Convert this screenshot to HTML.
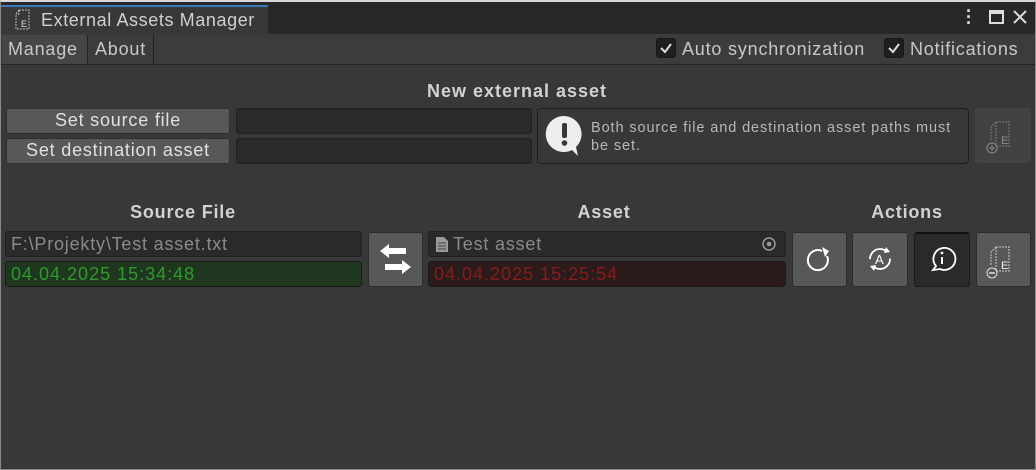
<!DOCTYPE html>
<html><head><style>
*{box-sizing:border-box;margin:0;padding:0}
body{width:1036px;height:470px;background:#383838;font-family:"Liberation Sans",sans-serif;color:#c4c4c4;position:relative;overflow:hidden;letter-spacing:0.8px}
.a{position:absolute}
.win{left:0;top:0;width:1036px;height:470px;border:1px solid #8a8a8a;border-top:2px solid #d8d8d8}
.title{left:1px;top:2px;width:1034px;height:32px;background:#282828}
.tab{left:1px;top:5px;width:267px;height:29px;background:#383838;border-top:2px solid #3a79bb}
.tb{left:1px;top:34px;width:1034px;height:31px;background:#3c3c3c;border-bottom:1px solid #242424}
.btn{background:#585858;border:1px solid #303030;border-radius:3px;color:#e0e0e0;font-size:18px;text-align:center;line-height:22px}
.fld{background:#2a2a2a;border:1px solid #212121;border-radius:3px}
.cb{width:20px;height:20px;background:#1f1f1f;border-radius:3px;border:1px solid #181818}
.h{font-weight:bold;font-size:18px;color:#d2d2d2;text-align:center}
.ab{background:#585858;border:1px solid #2c2c2c;border-radius:3px}
</style></head><body>
<div class="a title"></div>
<div class="a tab"></div>
<svg class="a" style="left:14px;top:9px" width="18" height="22" viewBox="0 0 18 22"><path d="M5 1H15V20H2V5Z M5 1V5H2" fill="none" stroke="#bbb" stroke-dasharray="2 1"/><text x="7" y="18" font-size="9" fill="#ddd" font-family="Liberation Sans">E</text></svg>
<div class="a" style="left:41px;top:10px;font-size:18px;color:#d0d0d0;letter-spacing:0.6px">External Assets Manager</div>
<div class="a" style="left:966px;top:8px;width:4px;height:18px;color:#ddd;font-size:18px;font-weight:bold;line-height:6px">·<br>·<br>·</div>
<div class="a" style="left:989px;top:10px;width:15px;height:14px;border:2px solid #ddd;border-top-width:4px"></div>
<svg class="a" style="left:1012px;top:9px" width="16" height="16"><path d="M2 2L14 14M14 2L2 14" stroke="#ddd" stroke-width="2"/></svg>
<div class="a tb"></div>
<div class="a" style="left:2px;top:35px;width:86px;height:29px;background:#464646;border-right:1px solid #222;font-size:18px;line-height:29px;padding-left:6px;color:#c8c8c8">Manage</div>
<div class="a" style="left:89px;top:35px;width:65px;height:29px;border-right:1px solid #222;font-size:18px;line-height:29px;padding-left:6px;color:#c8c8c8">About</div>
<div class="a cb" style="left:656px;top:38px"></div>
<svg class="a" style="left:656px;top:38px" width="20" height="20"><path d="M5 10L9 14L15 6" fill="none" stroke="#ddd" stroke-width="2"/></svg>
<div class="a" style="left:682px;top:39px;font-size:18px;color:#c8c8c8">Auto synchronization</div>
<div class="a cb" style="left:884px;top:38px"></div>
<svg class="a" style="left:884px;top:38px" width="20" height="20"><path d="M5 10L9 14L15 6" fill="none" stroke="#ddd" stroke-width="2"/></svg>
<div class="a" style="left:910px;top:39px;font-size:18px;color:#c8c8c8">Notifications</div>

<div class="a h" style="left:317px;top:81px;width:400px;letter-spacing:1px">New external asset</div>
<div class="a btn" style="left:6px;top:108px;width:224px;height:26px">Set source file</div>
<div class="a btn" style="left:6px;top:138px;width:224px;height:26px">Set destination asset</div>
<div class="a fld" style="left:236px;top:108px;width:296px;height:26px"></div>
<div class="a fld" style="left:236px;top:138px;width:296px;height:26px"></div>
<div class="a" style="left:537px;top:108px;width:432px;height:56px;background:#383838;border:1px solid #1e1e1e;border-radius:4px"></div>
<svg class="a" style="left:544px;top:114px" width="42" height="44" viewBox="0 0 42 44"><path d="M20 2A18 18 0 1 0 28 36L34 42L32 33A18 18 0 0 0 20 2Z" fill="#eee"/><rect x="18" y="9" width="5" height="15" rx="2" fill="#383838"/><circle cx="20.5" cy="29" r="2.8" fill="#383838"/></svg>
<div class="a" style="left:591px;top:119px;font-size:14.5px;line-height:18px;color:#b8b8b8;width:372px;letter-spacing:0.9px">Both source file and destination asset paths must be set.</div>
<div class="a" style="left:975px;top:108px;width:56px;height:55px;background:#424242;border-radius:3px"></div>
<svg class="a" style="left:985px;top:118px" width="30" height="38" viewBox="0 0 30 38"><path d="M11 4H24V28H11Z M11 4L6 9V22" fill="none" stroke="#7a7a7a" stroke-dasharray="2 1"/><text x="16" y="26" font-size="11" fill="#8a8a8a" font-family="Liberation Sans">E</text><circle cx="7" cy="30" r="5" fill="none" stroke="#8a8a8a"/><path d="M4 30H10M7 27V33" stroke="#8a8a8a"/></svg>

<div class="a h" style="left:83px;top:202px;width:200px">Source File</div>
<div class="a h" style="left:504px;top:202px;width:200px">Asset</div>
<div class="a h" style="left:807px;top:202px;width:200px">Actions</div>

<div class="a fld" style="left:5px;top:231px;width:357px;height:26px;font-size:18px;color:#8a8a8a;padding-left:5px;line-height:24px">F:\Projekty\Test asset.txt</div>
<div class="a" style="left:5px;top:261px;width:357px;height:26px;background:#1f361f;border:1px solid #1a1a1a;border-radius:3px;font-size:18px;color:#2f9a2f;padding-left:5px;line-height:24px;letter-spacing:1px">04.04.2025 15:34:48</div>
<div class="a ab" style="left:368px;top:232px;width:55px;height:55px"></div>
<svg class="a" style="left:368px;top:232px" width="55" height="55"><path d="M12 19L21 12V16H38V22H21V26Z" fill="#fff"/><path d="M43 35L34 28V32H17V38H34V42Z" fill="#fff"/></svg>

<div class="a fld" style="left:428px;top:231px;width:358px;height:26px;font-size:18px;color:#8a8a8a;padding-left:24px;line-height:24px">Test asset</div>
<svg class="a" style="left:435px;top:236px" width="14" height="17"><path d="M1 1H9L13 5V16H1Z" fill="#999"/><path d="M3 7H11M3 10H11M3 13H11" stroke="#444"/></svg>
<svg class="a" style="left:761px;top:236px" width="16" height="16"><circle cx="8" cy="8" r="6" fill="none" stroke="#999" stroke-width="1.5"/><circle cx="8" cy="8" r="2.3" fill="#999"/></svg>
<div class="a" style="left:428px;top:261px;width:358px;height:26px;background:#2c1b1b;border:1px solid #1a1a1a;border-radius:3px;font-size:18px;color:#861c1c;padding-left:5px;line-height:24px;letter-spacing:1px">04.04.2025 15:25:54</div>

<div class="a ab" style="left:792px;top:232px;width:55px;height:55px"></div>
<svg class="a" style="left:792px;top:232px" width="55" height="55"><path d="M35 24A10 10 0 1 1 30 19" fill="none" stroke="#fff" stroke-width="2"/><path d="M30 15L37 19L33 25Z" fill="#fff"/></svg>
<div class="a ab" style="left:852px;top:232px;width:56px;height:55px"></div>
<svg class="a" style="left:852px;top:232px" width="56" height="55"><circle cx="28" cy="27" r="10" fill="none" stroke="#fff" stroke-width="1.8" stroke-dasharray="22 9"/><path d="M34 15L38 20L32 21Z M22 39L18 34L24 33Z" fill="#fff"/><text x="23" y="32" font-size="13" fill="#fff" font-family="Liberation Sans">A</text></svg>
<div class="a" style="left:914px;top:232px;width:56px;height:55px;background:#2a2a2a;border:1px solid #1c1c1c;border-top:2px solid #111;border-radius:3px"></div>
<svg class="a" style="left:914px;top:232px" width="56" height="55"><path d="M22 34A11 11 0 1 1 26 37L19 38Z" fill="none" stroke="#fff" stroke-width="1.8"/><circle cx="28" cy="21" r="1.4" fill="#fff"/><path d="M28 25V32" stroke="#fff" stroke-width="2"/></svg>
<div class="a ab" style="left:976px;top:232px;width:55px;height:55px"></div>
<svg class="a" style="left:985px;top:243px" width="30" height="38" viewBox="0 0 30 38"><path d="M11 4H24V28H11Z M11 4L6 9V22" fill="none" stroke="#ccc" stroke-dasharray="2 1"/><text x="16" y="26" font-size="11" fill="#eee" font-family="Liberation Sans">E</text><circle cx="7" cy="30" r="5" fill="none" stroke="#ddd"/><path d="M4 30H10" stroke="#ddd" stroke-width="1.5"/></svg>
<div class="a win"></div>
</body></html>
